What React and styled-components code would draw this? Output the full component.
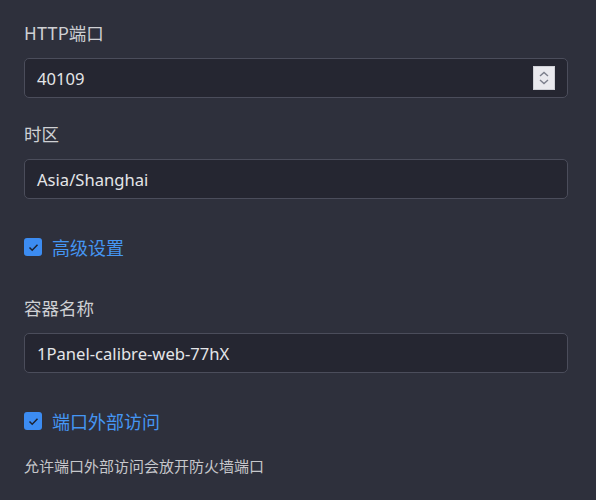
import styled, { createGlobalStyle } from "styled-components"

const GlobalStyle = createGlobalStyle`
    html, body {
        margin: 0;
        padding: 0;
        background: #2e303c;
    }
    body {
        font-family: "Noto Sans", "Noto Sans CJK SC", sans-serif;
    }
`

const Form = styled.div`
    width: 596px;
    height: 500px;
    box-sizing: border-box;
    padding: 21px 28px 0 24px;
    background: #2e303c;
    display: flex;
    flex-direction: column;
`

const Field = styled.div`
    display: flex;
    flex-direction: column;
    margin-bottom: ${props => props.gap || 24}px;
`

const Label = styled.div`
    font-family: "Noto Sans CJK SC", sans-serif;
    font-size: 17.5px;
    line-height: 24px;
    color: #cfd0d4;
    margin-bottom: 13px;
`

const InputBox = styled.div`
    position: relative;
    height: 40px;
    box-sizing: border-box;
    border: 1px solid #4b4d5b;
    border-radius: 5px;
    background: #252631;
    display: flex;
    align-items: center;
    padding: 0 12px;
`

const Value = styled.span`
    font-family: "Noto Sans", sans-serif;
    font-size: 16.6px;
    color: #e4e5e8;
`

const Spinner = styled.div`
    position: absolute;
    right: 12px;
    top: 7px;
    width: 22px;
    height: 24px;
    background: #e9e9ee;
    border: 1px solid #cfd0d6;
    box-sizing: border-box;
    display: flex;
    align-items: center;
    justify-content: center;
`

const CheckRow = styled.label`
    display: flex;
    align-items: center;
    gap: 10px;
    margin-bottom: ${props => props.gap || 0}px;
`

const Box = styled.span`
    width: 18px;
    height: 18px;
    border-radius: 3px;
    background: #3c8cf2;
    display: flex;
    align-items: center;
    justify-content: center;
`

const CheckText = styled.span`
    font-family: "Noto Sans CJK SC", sans-serif;
    font-size: 18px;
    line-height: 24px;
    color: #4596f3;
`

const Help = styled.div`
    font-family: "Noto Sans CJK SC", sans-serif;
    font-size: 15px;
    line-height: 22px;
    color: #c6c7cb;
`

function Check() {
    return (
        <Box>
            <svg width="11" height="9" viewBox="0 0 11 9">
                <path d="M1.5 4.5 L4.2 7.2 L9.5 1.8" fill="none" stroke="#1d2230" strokeWidth="1.5" />
            </svg>
        </Box>
    )
}

export default function App() {
    return (
        <>
            <GlobalStyle />
            <Form>
                <Field gap={24}>
                    <Label>HTTP端口</Label>
                    <InputBox>
                        <Value>40109</Value>
                        <Spinner>
                            <svg width="14" height="18" viewBox="0 0 14 18">
                                <path d="M3 7 L7 3.5 L11 7" fill="none" stroke="#7c7f8c" strokeWidth="1.4" />
                                <path d="M3 11 L7 14.5 L11 11" fill="none" stroke="#7c7f8c" strokeWidth="1.4" />
                            </svg>
                        </Spinner>
                    </InputBox>
                </Field>
                <Field gap={36}>
                    <Label>时区</Label>
                    <InputBox>
                        <Value>Asia/Shanghai</Value>
                    </InputBox>
                </Field>
                <CheckRow gap={37}>
                    <Check />
                    <CheckText>高级设置</CheckText>
                </CheckRow>
                <Field gap={36}>
                    <Label>容器名称</Label>
                    <InputBox>
                        <Value>1Panel-calibre-web-77hX</Value>
                    </InputBox>
                </Field>
                <CheckRow gap={22}>
                    <Check />
                    <CheckText>端口外部访问</CheckText>
                </CheckRow>
                <Help>允许端口外部访问会放开防火墙端口</Help>
            </Form>
        </>
    )
}
